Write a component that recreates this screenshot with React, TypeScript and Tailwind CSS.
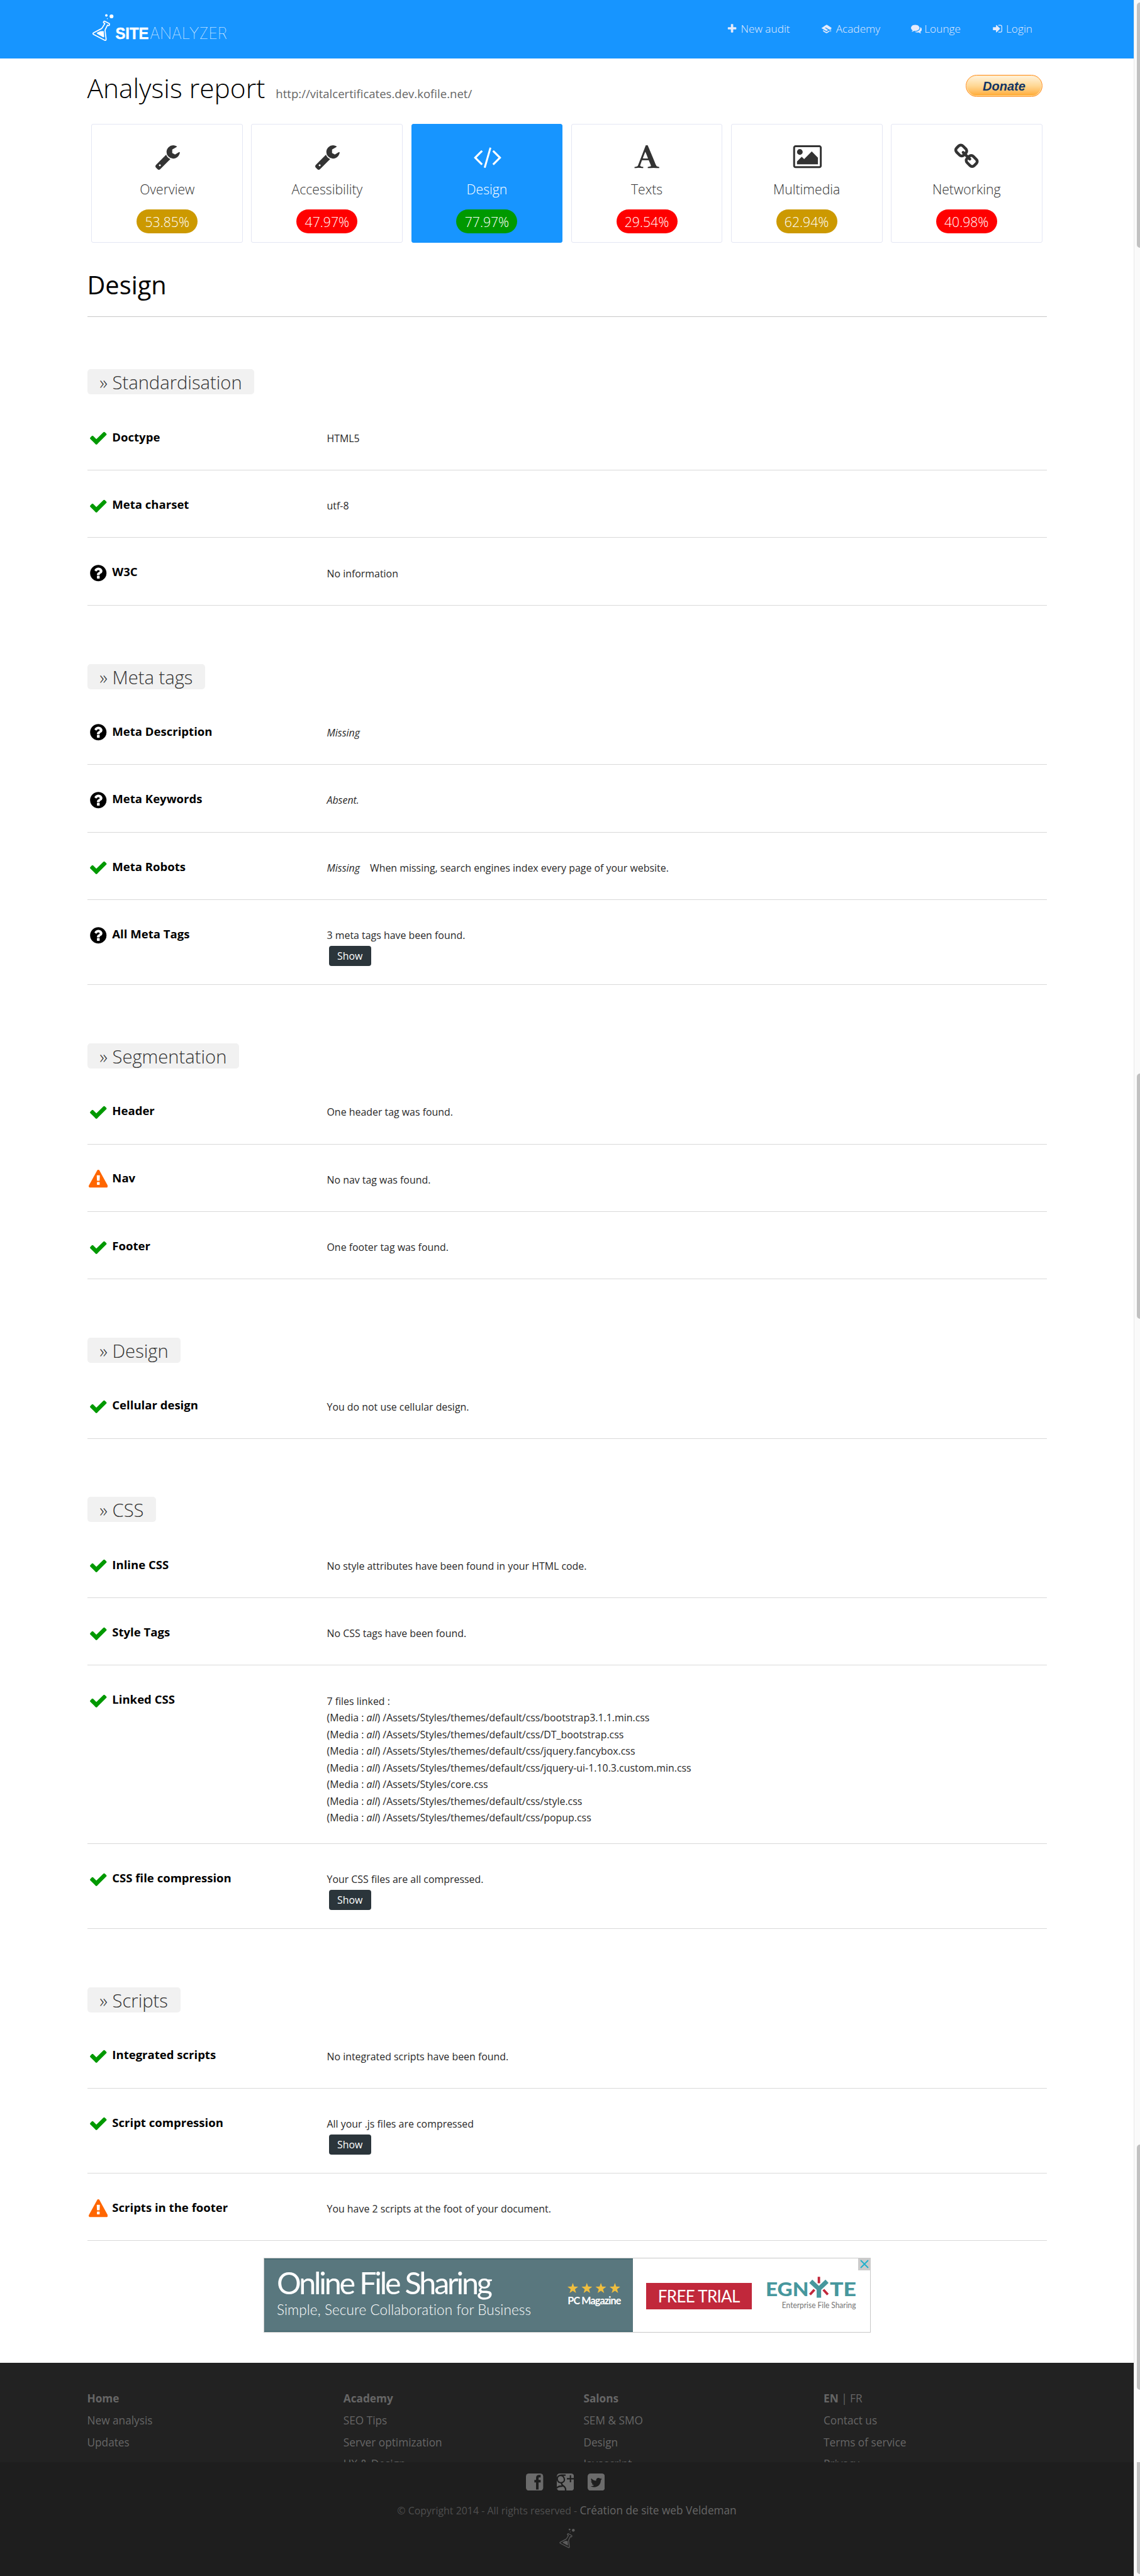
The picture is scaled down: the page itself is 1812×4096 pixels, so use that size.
import React from "react";

const PATHS = {
  wrench:
    "M448 1472q0-26-19-45t-45-19-45 19-19 45 19 45 45 19 45-19 19-45zm644-420l-682 682q-37 37-90 37-52 0-91-37l-106-108q-38-36-38-90 0-53 38-91l681-681q39 98 114.5 173.5t173.5 114.5zm634-435q0 39-23 106-47 134-164.5 217.5t-258.5 83.5q-185 0-316.5-131.5t-131.5-316.5 131.5-316.5 316.5-131.5q58 0 121.5 16.5t107.5 46.5q16 11 16 28t-16 28l-293 169v224l193 107q5-3 79-48.5t135.5-81 70.5-35.5q15 0 23.5 10t8.5 25z",
  code: "M617 1399l-50 50q-10 10-23 10t-23-10l-466-466q-10-10-10-23t10-23l466-466q10-10 23-10t23 10l50 50q10 10 10 23t-10 23l-393 393 393 393q10 10 10 23t-10 23zm591-1067l-373 1291q-4 13-15.5 19.5t-23.5 2.5l-62-17q-13-4-19.5-15.5t-2.5-24.5l373-1291q4-13 15.5-19.5t23.5-2.5l62 17q13 4 19.5 15.5t2.5 24.5zm657 651l-466 466q-10 10-23 10t-23-10l-50-50q-10-10-10-23t10-23l393-393-393-393q-10-10-10-23t10-23l50-50q10-10 23-10t23 10l466 466q10 10 10 23t-10 23z",
  font: "M789 559l-170 450q33 0 136.5 2t160.5 2q19 0 57-2-87-253-184-452zm-725 1105l2-79q23-7 56-12.5t57-10.5 49.5-14.5 44.5-29 31-50.5l237-616 280-724h128q8 14 11 21l205 480q33 78 106 257.5t114 274.500q15 34 58 144.500t72 168.500q20 45 35 57 19 15 88 29.500t84 20.500q6 38 6 57 0 5-.5 13.500t-.5 12.500q-63 0-190-8t-191-8q-76 0-215 7t-178 8q0-43 4-78l131-28q1 0 12.500-2.500t15.500-3.500 14.500-4.500 15-6.500 11-8 9-11 2.500-14q0-16-31-96.500t-72-177.500-42-100l-450-2q-26 58-76.500 195.500t-50.500 162.500q0 22 14 37.500t43.500 24.500 48.500 13.500 57 8.500 41 4q1 19 1 58 0 9-2 27-58 0-174.500-10t-174.500-10q-8 0-26.500 4t-21.500 4q-80 14-188 14z",
  picture:
    "M704 576q0 80-56 136t-136 56-136-56-56-136 56-136 136-56 136 56 56 136zm1024 384v448h-1408v-192l320-320 160 160 512-512zm96-704h-1600q-13 0-22.5 9.5t-9.5 22.5v1216q0 13 9.5 22.5t22.5 9.5h1600q13 0 22.5-9.5t9.5-22.5v-1216q0-13-9.5-22.5t-22.5-9.5zm160 32v1216q0 66-47 113t-113 47h-1600q-66 0-113-47t-47-113v-1216q0-66 47-113t113-47h1600q66 0 113 47t47 113z",
  link: "M1520 1216q0-40-28-68l-208-208q-28-28-68-28-42 0-72 32 3 3 19 18.5t21.5 21.5 15 19 13 25.5 3.5 27.5q0 40-28 68t-68 28q-15 0-27.5-3.5t-25.5-13-19-15-21.5-21.5-18.5-19q-33 31-33 73 0 40 28 68l206 207q27 27 68 27 40 0 68-26l147-146q28-28 28-67zm-703-705q0-40-28-68l-206-207q-28-28-68-28-39 0-68 27l-147 146q-28 28-28 67 0 40 28 68l208 208q27 27 68 27 42 0 72-31-3-3-19-18.5t-21.5-21.5-15-19-13-25.5-3.5-27.5q0-40 28-68t68-28q15 0 27.5 3.5t25.5 13 19 15 21.5 21.5 18.5 19q33-31 33-73zm895 705q0 120-85 203l-147 146q-83 83-203 83-121 0-204-85l-206-207q-83-83-83-203 0-123 88-209l-88-88q-86 88-208 88-120 0-204-84l-208-208q-84-84-84-204t85-203l147-146q83-83 203-83 121 0 204 85l206 207q83 83 83 203 0 123-88 209l88 88q86-88 208-88 120 0 204 84l208 208q84 84 84 204z",
  plus: "M1600 736v192q0 40-28 68t-68 28h-416v416q0 40-28 68t-68 28h-192q-40 0-68-28t-28-68v-416h-416q-40 0-68-28t-28-68v-192q0-40 28-68t68-28h416v-416q0-40 28-68t68-28h192q40 0 68 28t28 68v416h416q40 0 68 28t28 68z",
  comments:
    "M1408 768q0 139-94 257t-256.5 186.500-353.500 68.500q-86 0-176-16-124 88-278 128-36 9-86 16h-3q-11 0-20.5-8t-11.5-21q-1-3-1-6.500t.5-6.500 2-6l2.500-5 3.500-5.500 4-5 4.500-5 4-4.500q5-6 23-25t26-29.500 22.500-29 25-38.500 20.500-44q-124-72-195-177t-71-224q0-139 94-257t256.500-186.500 353.500-68.500 353.500 68.500 256.500 186.500 94 257zm384 256q0 120-71 224.500t-195 176.500q10 24 20.500 44t25 38.500 22.500 29 26 29.500 23 25q1 1 4 4.500t4.500 5 4 5 3.500 5.500l2.500 5 2 6 .5 6.500-1 6.500q-3 14-13 22t-22 7q-50-7-86-16-154-40-278-128-90 16-176 16-271 0-472-132 58 4 88 4 161 0 309-45t264-129q125-92 192-212t67-254q0-77-23-152 129 71 204 178t75 230z",
  signIn:
    "M1312 896q0 26-19 45l-544 544q-19 19-45 19t-45-19-19-45v-288h-448q-26 0-45-19t-19-45v-384q0-26 19-45t45-19h448v-288q0-26 19-45t45-19 45 19l544 544q19 19 19 45zm352-352v704q0 119-84.5 203.500t-203.500 84.500h-320q-13 0-22.500-9.500t-9.500-22.500q0-4-1-20t-.5-26.500 3-23.500 10-19.500 20.500-6.500h320q66 0 113-47t47-113v-704q0-66-47-113t-113-47h-312l-11.500-1-11.500-3-8-5.500-7-9-2-13.500q0-4-1-20t-.5-26.500 3-23.500 10-19.500 20.500-6.500h320q119 0 203.500 84.500t84.500 203.500z",
  academy:
    "M60 800L860 260 1000 260 1740 760 1740 850 1640 920V1420H1540V985L1400 1080 800 700 640 760 1180 1120 960 1270H860ZM340 1130L840 1440H980L1420 1170V1350L980 1640H840L340 1340Z",
  check:
    "M1671 566q0 40-28 68l-724 724-136 136q-28 28-68 28t-68-28l-136-136-362-362q-28-28-28-68t28-68l136-136q28-28 68-28t68 28l294 295 656-657q28-28 68-28t68 28l136 136q28 28 28 68z",
  question:
    "M1024 1376v-192q0-14-9-23t-23-9h-192q-14 0-23 9t-9 23v192q0 14 9 23t23 9h192q14 0 23-9t9-23zm256-672q0-88-55.500-163t-138.500-116-170-41q-243 0-371 213-15 24 8 42l132 100q7 6 19 6 16 0 25-12 53-68 86-92 34-24 86-24 48 0 85.500 26t37.500 59q0 38-20 61t-68 45q-63 28-115.500 86.500t-52.500 125.500v36q0 14 9 23t23 9h192q14 0 23-9t9-23q0-19 21.500-49.500t54.500-49.500q32-18 49-28.500t46-35 44.500-48 28-60.500 12.500-81zm384 192q0 209-103 385.500t-279.500 279.500-385.500 103-385.500-103-279.500-279.500-103-385.500 103-385.500 279.500-279.500 385.500-103 385.500 103 279.500 279.500 103 385.500z",
  warning:
    "M1024 1375v-190q0-14-9.500-23.500t-22.500-9.500h-192q-13 0-22.500 9.500t-9.500 23.500v190q0 14 9.500 23.500t22.500 9.500h192q13 0 22.500-9.500t9.500-23.500zm-2-374l18-459q0-12-10-19-13-11-24-11h-220q-11 0-24 11-10 7-10 21l17 457q0 10 10 16.500t24 6.500h185q14 0 23.500-6.500t10.500-16.500zm-14-934l768 1408q35 63-2 126-17 29-46.500 46t-63.500 17h-1536q-34 0-63.500-17t-46.500-46q-37-63-2-126l768-1408q17-31 47-49t65-18 65 18 47 49z",
};

type IconName = keyof typeof PATHS;

function Glyph({ name, className, box = "0 0 1792 1792" }: { name: IconName; className: string; box?: string }) {
  return (
    <svg viewBox={box} className={className} fill="currentColor" fillRule="evenodd">
      <path d={PATHS[name]} />
    </svg>
  );
}

function FlaskShape() {
  return (
    <>
      <circle cx="136" cy="79" r="9" fill="currentColor" />
      <circle cx="173" cy="86" r="14" fill="currentColor" />
      <circle cx="143" cy="103" r="3.5" fill="currentColor" />
      <path
        d="M124 121L157 138Q160 141 158 147Q156 154 150 152L144 149L128 182Q126 187 127 192L134 250Q134 262 124 258L44 216Q36 211 43 205L98 176Q105 172 108 166L125 138L119 134Q113 131 116 125Q119 119 124 121Z"
        fill="none"
        stroke="currentColor"
        strokeWidth="8"
        strokeLinejoin="round"
      />
      <path d="M70 203L92 193Q96 192 101 192L117 192L120 231Q120 239 113 236L70 212Q64 207 70 203Z" fill="currentColor" />
    </>
  );
}

function Logo() {
  return (
    <svg viewBox="0 0 1050 330" className="ml-[139.200px] mt-[6.600px] h-[72.900px] w-[232px] text-white">
      <FlaskShape />
      <text x="201" y="248" textLength="240" lengthAdjust="spacingAndGlyphs" fontSize="118" fontWeight="700" fill="#fff" stroke="#fff" strokeWidth="2" fontFamily="'Liberation Sans', Arial, sans-serif">
        SITE
      </text>
      <text x="449" y="248" textLength="556" lengthAdjust="spacingAndGlyphs" fontSize="115" fontWeight="100" fill="#fff" fontFamily="Inter, sans-serif">
        ANALYZER
      </text>
    </svg>
  );
}

const NAV: { icon: IconName; label: string; cls: string }[] = [
  { icon: "plus", label: "New audit", cls: "w-[149.200px] gap-[5px]" },
  { icon: "academy", label: "Academy", cls: "w-[143.400px] gap-[7px]" },
  { icon: "comments", label: "Lounge", cls: "w-[128.600px] gap-[4.200px]" },
  { icon: "signIn", label: "Login", cls: "w-[70px] gap-[5.300px]" },
];

function Header() {
  return (
    <header className="flex h-[92.800px] w-full bg-[#1795ff]">
      <Logo />
      <nav className="ml-auto mr-[155.500px] flex h-[92px] items-start pt-[33.800px] text-[17.240px] font-light leading-[24px] text-[#e4eafa]">
        {NAV.map((n) => (
          <a key={n.label} className={"flex items-center whitespace-nowrap " + n.cls}>
            <Glyph name={n.icon} className="size-[17.200px] shrink-0" />
            {n.label}
          </a>
        ))}
      </nav>
    </header>
  );
}

const TABS: { icon: IconName; box: string; iconCls: string; label: string; score: string; badge: string; active?: boolean }[] = [
  { icon: "wrench", box: "0 0 1792 1792", iconCls: "w-[42.400px]", label: "Overview", score: "53.85%", badge: "bg-[#cc9900]" },
  { icon: "wrench", box: "0 0 1792 1792", iconCls: "w-[42.400px]", label: "Accessibility", score: "47.97%", badge: "bg-[#ff0000]" },
  { icon: "code", box: "-55 0 1920 1792", iconCls: "w-[45.400px]", label: "Design", score: "77.97%", badge: "bg-[#009900]", active: true },
  { icon: "font", box: "0 0 1792 1792", iconCls: "w-[42.400px]", label: "Texts", score: "29.54%", badge: "bg-[#ff0000]" },
  { icon: "picture", box: "-50 0 2048 1792", iconCls: "w-[48.500px]", label: "Multimedia", score: "62.94%", badge: "bg-[#cc9900]" },
  { icon: "link", box: "0 0 1792 1792", iconCls: "w-[42.400px]", label: "Networking", score: "40.98%", badge: "bg-[#ff0000]" },
];

function Tabs() {
  return (
    <ul className="grid h-[188.400px] grid-cols-6 gap-[13.300px] px-[6.900px]">
      {TABS.map((t) => (
        <li
          key={t.label}
          className={
            "flex flex-col items-center rounded-[3px] border pt-[29.200px] text-[21.200px] font-light leading-[29px] " +
            (t.active ? "border-[#1795ff] bg-[#1795ff] text-white" : "border-[#e4e6f4] text-[#333]")
          }
        >
          <Glyph name={t.icon} box={t.box} className={"h-[42.400px] overflow-visible " + t.iconCls} />
          <span className="mt-[15.800px]">{t.label}</span>
          <span className={"mt-[17.900px] flex h-[38.600px] w-[97px] items-center justify-center rounded-full text-white " + t.badge}>
            {t.score}
          </span>
        </li>
      ))}
    </ul>
  );
}

type Status = "check" | "question" | "warning";
const STATUS_COLOR: Record<Status, string> = {
  check: "text-[#009900]",
  question: "text-black",
  warning: "text-[#ff6600]",
};

type RowData = { status: Status; label: string; value: React.ReactNode; show?: boolean; tall?: boolean };

function Row({ status, label, value, show, tall }: RowData) {
  const height = tall ? "h-[283.700px]" : show ? "h-[135.200px]" : "h-[107.400px]";
  return (
    <div className={"flex items-start border-b border-[#d9d9d9] " + height}>
      <div className="flex w-[381px] items-start pl-[2.300px]">
        <Glyph name={status} className={"mt-[40.600px] size-[30.500px] shrink-0 " + STATUS_COLOR[status]} />
        <h3 className="ml-[7px] mt-[40.900px] text-[18.560px] font-bold leading-[26.500px] text-black">{label}</h3>
      </div>
      <div className="mt-[43.200px] text-[15.910px] leading-[26.520px] text-[#282828]">
        {value}
        {show && (
          <button className="ml-[3px] mt-[3.400px] flex h-[31.900px] w-[67.300px] items-center justify-center rounded-[4px] bg-[#2b353b] text-white">
            Show
          </button>
        )}
      </div>
    </div>
  );
}

const CSS_FILES = [
  "/Assets/Styles/themes/default/css/bootstrap3.1.1.min.css",
  "/Assets/Styles/themes/default/css/DT_bootstrap.css",
  "/Assets/Styles/themes/default/css/jquery.fancybox.css",
  "/Assets/Styles/themes/default/css/jquery-ui-1.10.3.custom.min.css",
  "/Assets/Styles/core.css",
  "/Assets/Styles/themes/default/css/style.css",
  "/Assets/Styles/themes/default/css/popup.css",
];

const SECTIONS: { title: string; rows: RowData[] }[] = [
  {
    title: "Standardisation",
    rows: [
      { status: "check", label: "Doctype", value: <p>HTML5</p> },
      { status: "check", label: "Meta charset", value: <p>utf-8</p> },
      { status: "question", label: "W3C", value: <p>No information</p> },
    ],
  },
  {
    title: "Meta tags",
    rows: [
      { status: "question", label: "Meta Description", value: <p className="italic">Missing</p> },
      { status: "question", label: "Meta Keywords", value: <p className="italic">Absent.</p> },
      {
        status: "check",
        label: "Meta Robots",
        value: (
          <p className="flex gap-[16px]">
            <i>Missing</i>
            <span>When missing, search engines index every page of your website.</span>
          </p>
        ),
      },
      { status: "question", label: "All Meta Tags", value: <p>3 meta tags have been found.</p>, show: true },
    ],
  },
  {
    title: "Segmentation",
    rows: [
      { status: "check", label: "Header", value: <p>One header tag was found.</p> },
      { status: "warning", label: "Nav", value: <p>No nav tag was found.</p> },
      { status: "check", label: "Footer", value: <p>One footer tag was found.</p> },
    ],
  },
  { title: "Design", rows: [{ status: "check", label: "Cellular design", value: <p>You do not use cellular design.</p> }] },
  {
    title: "CSS",
    rows: [
      { status: "check", label: "Inline CSS", value: <p>No style attributes have been found in your HTML code.</p> },
      { status: "check", label: "Style Tags", value: <p>No CSS tags have been found.</p> },
      {
        status: "check",
        label: "Linked CSS",
        tall: true,
        value: (
          <>
            <p>7 files linked :</p>
            {CSS_FILES.map((f) => (
              <p key={f}>
                (Media : <i>all</i>) {f}
              </p>
            ))}
          </>
        ),
      },
      { status: "check", label: "CSS file compression", value: <p>Your CSS files are all compressed.</p>, show: true },
    ],
  },
  {
    title: "Scripts",
    rows: [
      { status: "check", label: "Integrated scripts", value: <p>No integrated scripts have been found.</p> },
      { status: "check", label: "Script compression", value: <p>All your .js files are compressed</p>, show: true },
      { status: "warning", label: "Scripts in the footer", value: <p>You have 2 scripts at the foot of your document.</p> },
    ],
  },
];

function Banner() {
  return (
    <div className="relative ml-[280.500px] mt-[26.700px] flex h-[119.400px] w-[965.400px] border border-[#c8c8c8] font-['Lato',sans-serif]">
      <div className="flex h-full w-[586px] justify-between border-y-2 border-[#4a6d75] bg-[#59777e] pl-[20px] pr-[19.500px] text-white">
        <div className="pt-[5.500px]">
          <p className="whitespace-nowrap text-[48.500px] leading-[60px] tracking-[-3.200px]">Online File Sharing</p>
          <p className="whitespace-nowrap text-[22.500px] font-light leading-[28px] tracking-[0.100px]">Simple, Secure Collaboration for Business</p>
        </div>
        <div className="pt-[36.500px]">
          <svg viewBox="0 0 84 17" className="h-[17px] w-[84px]" fill="#efbe3f">
            {[0, 1, 2, 3].map((i) => (
              <path
                key={i}
                transform={`translate(${i * 22.3} 0)`}
                d="M8.500 0L10.600 5.800 17 6 11.900 9.900 13.700 16 8.500 12.400 3.300 16 5.100 9.900 0 6 6.400 5.800Z"
              />
            ))}
          </svg>
          <p className="whitespace-nowrap text-[16.200px] font-bold leading-[22px] tracking-[-0.900px]">PC Magazine</p>
        </div>
      </div>
      <div className="flex flex-1 items-start bg-white">
        <div className="ml-[21px] mt-[38.500px] flex h-[42.500px] w-[167.500px] items-center justify-center bg-[#c1283b] text-[26px] leading-none tracking-[-0.700px] text-white">
          FREE TRIAL
        </div>
        <svg viewBox="0 0 226 88" preserveAspectRatio="none" className="ml-[22px] mt-[28px] h-[56.400px] w-[146px] overflow-visible" fontFamily="Lato, sans-serif">
          <text x="0" y="50.500" fontSize="47" fontWeight="900" textLength="106" lengthAdjust="spacingAndGlyphs" fill="#47979d">
            EGN
          </text>
          <text x="158" y="50.500" fontSize="47" fontWeight="900" textLength="65" lengthAdjust="spacingAndGlyphs" fill="#47979d">
            TE
          </text>
          <path d="M111 13L131 32L151 13M131 31V54" fill="none" stroke="#47979d" strokeWidth="11" />
          <path d="M131 2V18M120 34L109 46M142 34L153 46" fill="none" stroke="#c1283b" strokeWidth="6" />
          <text x="40" y="79.500" fontSize="21.500" textLength="182" lengthAdjust="spacingAndGlyphs" fill="#757575">
            Enterprise File Sharing
          </text>
        </svg>
      </div>
      <svg viewBox="0 0 20 20" className="absolute -right-px -top-px size-[20px] bg-[#cbcbcb]">
        <path d="M4 4L16 16M16 4L4 16" stroke="#1fb0cc" strokeWidth="1.800" />
      </svg>
    </div>
  );
}

function Report() {
  return (
    <main className="mx-auto h-[3664.200px] w-[1525px]">
      <div className="flex h-[104.700px] items-start">
        <h1 className="mt-[22.300px] whitespace-nowrap text-[42.430px] font-light leading-[50px] text-black">Analysis report</h1>
        <p className="ml-[17px] mt-[43.300px] text-[18.560px] leading-[26px] text-[#666]">http://vitalcertificates.dev.kofile.net/</p>
        <button className="ml-auto mr-[6.600px] mt-[26.500px] flex h-[34.600px] w-[122px] items-center justify-center rounded-full border border-[#ff9022] bg-linear-to-b from-[#fff3dd] via-[#ffd894] via-50% to-[#ffa826] font-['Liberation_Sans',Arial,sans-serif] text-[20px] font-bold italic leading-none text-[#0f3465] shadow-[inset_0_0_0_1px_#ffe3b5]">
          Donate
        </button>
      </div>
      <Tabs />
      <h2 className="flex h-[118px] items-start border-b border-[#c8c8c8] pt-[40.200px] text-[39.780px] leading-[54px] text-black">Design</h2>
      <div className="h-[83.500px]" />
      {SECTIONS.map((s) => (
        <section key={s.title} className="mb-[92.700px] last-of-type:mb-0">
          <h2 className="mb-[13.300px] flex h-[40px] w-fit items-center whitespace-nowrap rounded-[5px] bg-[#f1f1f1] px-[19.800px] pt-[2px] text-[29.170px] font-light leading-[40px] text-[#333]">
            » {s.title}
          </h2>
          {s.rows.map((r) => (
            <Row key={r.label} {...r} />
          ))}
        </section>
      ))}
      <Banner />
    </main>
  );
}

const FOOTER: { w: string; head: React.ReactNode; links: string[] }[] = [
  { w: "w-[407.300px]", head: <b>Home</b>, links: ["New analysis", "Updates"] },
  { w: "w-[381.600px]", head: <b>Academy</b>, links: ["SEO Tips", "Server optimization", "UX & Design"] },
  { w: "w-[381.600px]", head: <b>Salons</b>, links: ["SEM & SMO", "Design", "Javascript"] },
  { w: "w-[350px]", head: <><b>EN</b> | FR</>, links: ["Contact us", "Terms of service", "Privacy"] },
];

function Footer() {
  return (
    <footer>
      <div className="h-[158px] overflow-hidden bg-[#222] pt-[40.500px]">
        <div className="mx-auto flex w-[1525px] text-[17.240px] leading-[34.600px] text-[#666]">
          {FOOTER.map((c, i) => (
            <div key={i} className={c.w}>
              <p>{c.head}</p>
              {c.links.map((l) => (
                <p key={l}>{l}</p>
              ))}
            </div>
          ))}
        </div>
      </div>
      <div className="flex h-[181px] flex-col items-center bg-[#1e1e1e] pt-[18px]">
        <div className="mr-[4.500px] flex gap-[21.500px]">
          <svg viewBox="0 0 41 41" className="size-[27.400px]">
            <rect width="41" height="41" rx="7" fill="#6b6b6b" />
            <path d="M35 6.500H31Q27 6.500 27 11V38M20 18.500H35" fill="none" stroke="#1e1e1e" strokeWidth="6" />
          </svg>
          <svg viewBox="0 0 41 41" className="size-[27.400px]">
            <defs>
              <clipPath id="gbox">
                <rect width="41" height="41" rx="7" />
              </clipPath>
            </defs>
            <g clipPath="url(#gbox)">
              <rect width="41" height="41" fill="#6b6b6b" />
              <g fill="none" stroke="#1e1e1e">
                <path d="M21 4H11Q1 5 1 13Q2 22 10 22Q19 21 18 13Q16 5 9 4.500" strokeWidth="3.200" />
                <path d="M12 22Q10 26 15 29Q21 33 21 38V42M0 35Q2 30 14 30" strokeWidth="3.500" />
                <path d="M24 12.500H41M32.500 4V21" strokeWidth="3.200" />
              </g>
            </g>
          </svg>
          <svg viewBox="0 0 41 41" className="size-[27.400px]">
            <rect width="41" height="41" rx="7" fill="#6b6b6b" />
            <path
              transform="translate(7 8) scale(0.053)"
              fill="#1e1e1e"
              d="M459.370 151.716c.325 4.548.325 9.097.325 13.645 0 138.720-105.583 298.558-298.558 298.558-59.452 0-114.680-17.219-161.137-47.106 8.447.974 16.568 1.299 25.340 1.299 49.055 0 94.213-16.568 130.274-44.832-46.132-.975-84.792-31.188-98.112-72.772 6.498.974 12.995 1.624 19.818 1.624 9.421 0 18.843-1.300 27.614-3.573-48.081-9.747-84.143-51.980-84.143-102.985v-1.299c13.969 7.797 30.214 12.670 47.431 13.319-28.264-18.843-46.781-51.005-46.781-87.391 0-19.492 5.197-37.360 14.294-52.954 51.655 63.675 129.300 105.258 216.365 109.807-1.624-7.797-2.599-15.918-2.599-24.040 0-57.828 46.782-104.934 104.934-104.934 30.213 0 57.502 12.670 76.670 33.137 23.715-4.548 46.456-13.320 66.599-25.340-7.798 24.366-24.366 44.833-46.132 57.827 21.117-2.273 41.584-8.122 60.426-16.243-14.292 20.791-32.161 39.308-52.628 54.253z"
            />
          </svg>
        </div>
        <p className="mt-[19px] text-[17.240px] leading-[26px] text-[#666]">
          <span className="text-[15.910px] text-[#4f4f4f]">© Copyright 2014 - All rights reserved - </span>
          Création de site web Veldeman
        </p>
        <svg viewBox="34 66 156 200" className="mt-[15px] h-[32px] w-[25px] text-[#5c5c5c]">
          <FlaskShape />
        </svg>
      </div>
    </footer>
  );
}

function ScrollTrack() {
  return (
    <div className="flex h-[4096px] w-[10px] flex-col overflow-hidden border-l border-[#e8e8e8] bg-[#fafafa] pl-[4px]">
      <div className="mt-[4px] h-[390px] w-[10px] shrink-0 rounded-[5px] bg-[#c1c1c1]" />
      <div className="mt-[1313px] h-[390px] w-[10px] shrink-0 rounded-[5px] bg-[#c1c1c1]" />
      <div className="mt-[1313px] h-[390px] w-[10px] shrink-0 rounded-[5px] bg-[#c1c1c1]" />
      <div className="mt-[115px] h-[178px] w-[10px] shrink-0 rounded-b-[5px] bg-[#c1c1c1]" />
    </div>
  );
}

export default function App() {
  return (
    <div className="flex h-[4096px] w-[1812px] overflow-hidden bg-white font-['Open_Sans',sans-serif]">
      <div className="w-[1802px]">
        <Header />
        <Report />
        <Footer />
      </div>
      <ScrollTrack />
    </div>
  );
}
